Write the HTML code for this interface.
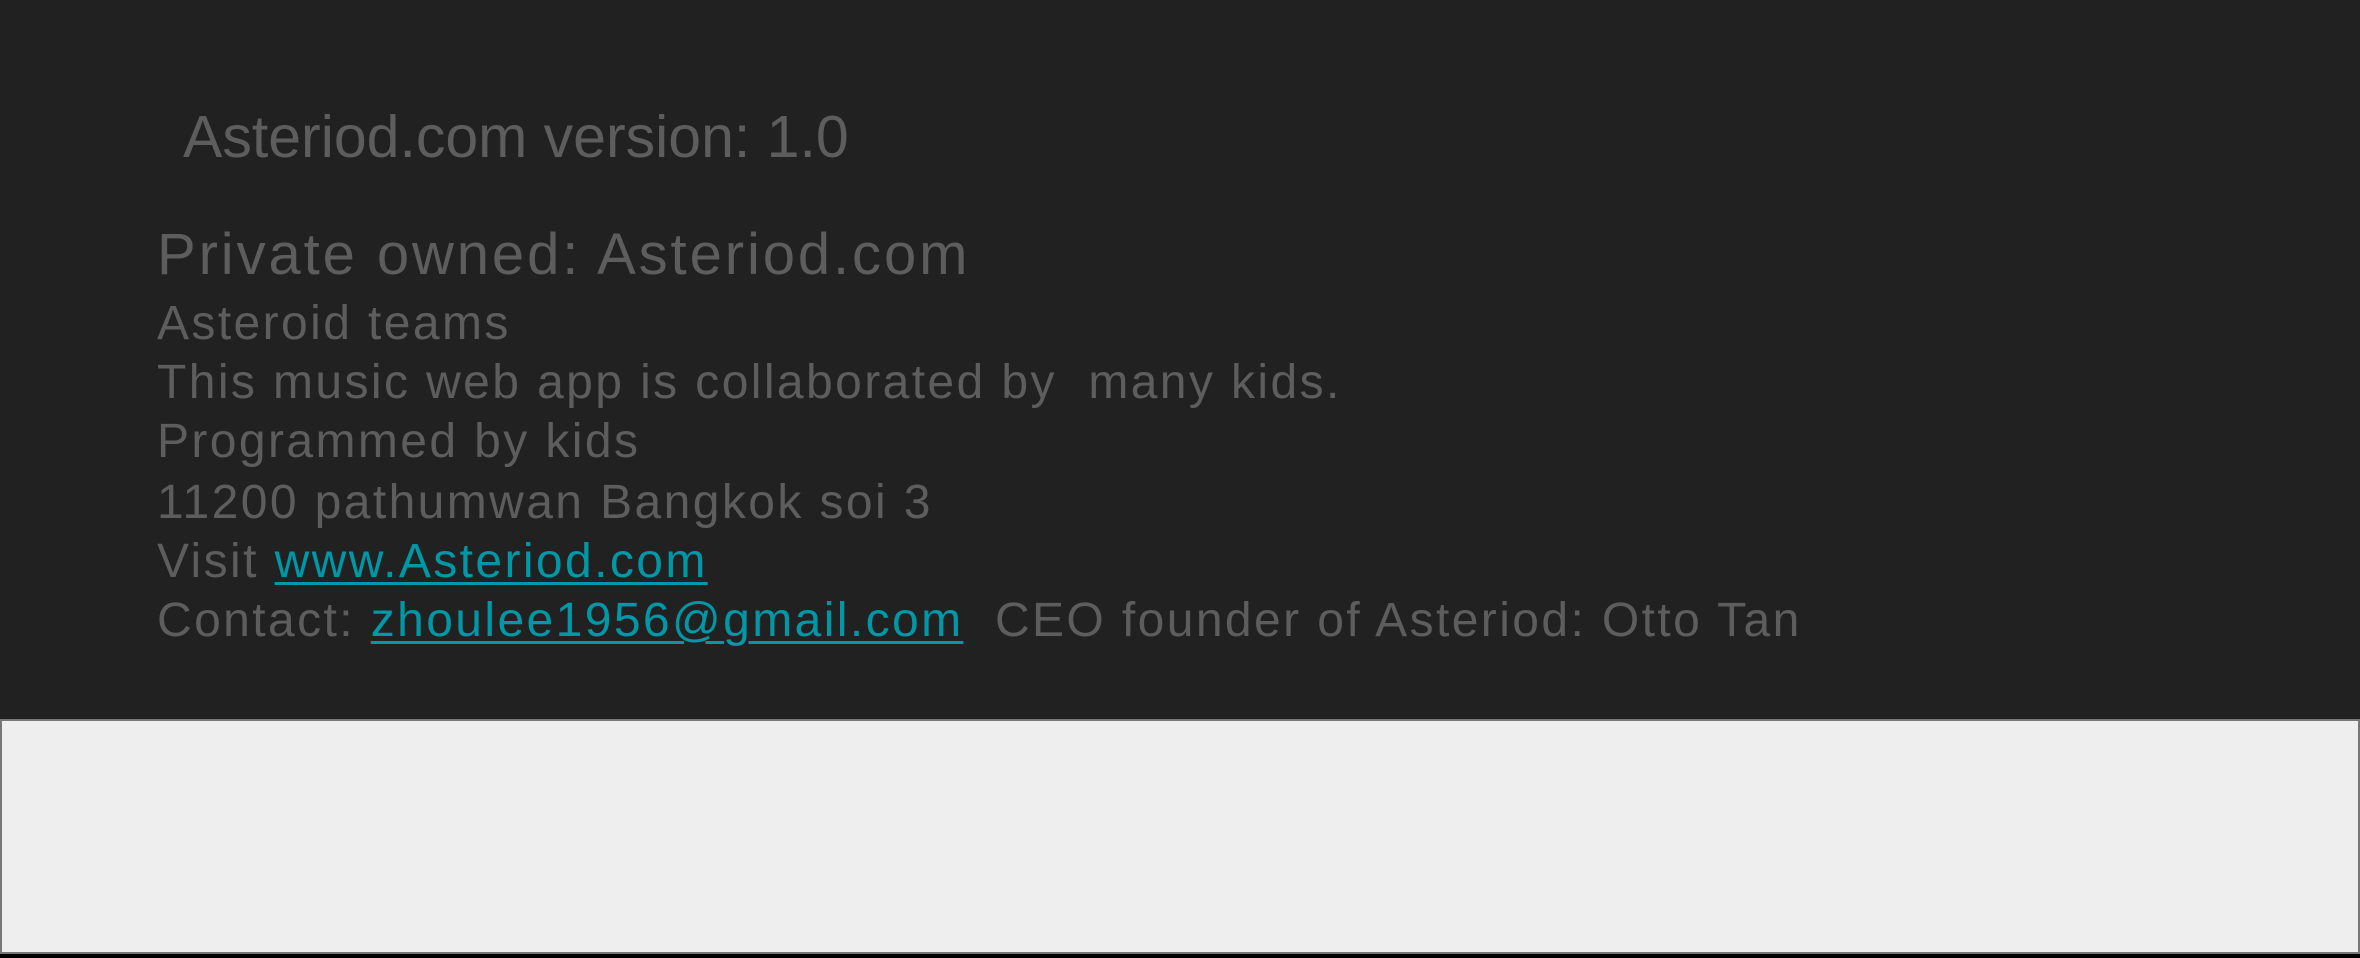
<!DOCTYPE html>
<html><head><style>
html,body{margin:0;padding:0;width:2360px;height:958px;overflow:hidden;background:#000;}
.top{position:absolute;left:0;top:0;width:2360px;height:719px;background:#212121;}
.box{position:absolute;left:0;top:719px;width:2356px;height:231px;background:#eeeeee;border:2px solid #777;}
.t{position:absolute;white-space:pre;color:#5d5d5d;font-family:"Liberation Sans",sans-serif;line-height:1;}
.v{left:183px;top:108px;font-size:59px;}
.p{left:157px;top:226px;font-size:58px;letter-spacing:2.9px;}
.l{left:157px;font-size:48px;letter-spacing:2.4px;}
a{color:#0097a7;text-decoration:underline;text-decoration-thickness:3px;text-underline-offset:5px;}
</style></head><body>
<div class="top"></div>
<div class="box"></div>
<div class="t v">Asteriod.com version: 1.0</div>
<div class="t p">Private owned: Asteriod.com</div>
<div class="t l" style="top:300px">Asteroid teams</div>
<div class="t l" style="top:359px">This music web app is collaborated by  many kids.</div>
<div class="t l" style="top:418px">Programmed by kids</div>
<div class="t l" style="top:479px">11200 pathumwan Bangkok soi 3</div>
<div class="t l" style="top:538px">Visit <a>www.Asteriod.com</a></div>
<div class="t l" style="top:597px">Contact: <a>zhoulee1956@gmail.com</a>  CEO founder of Asteriod: Otto Tan</div>
</body></html>
